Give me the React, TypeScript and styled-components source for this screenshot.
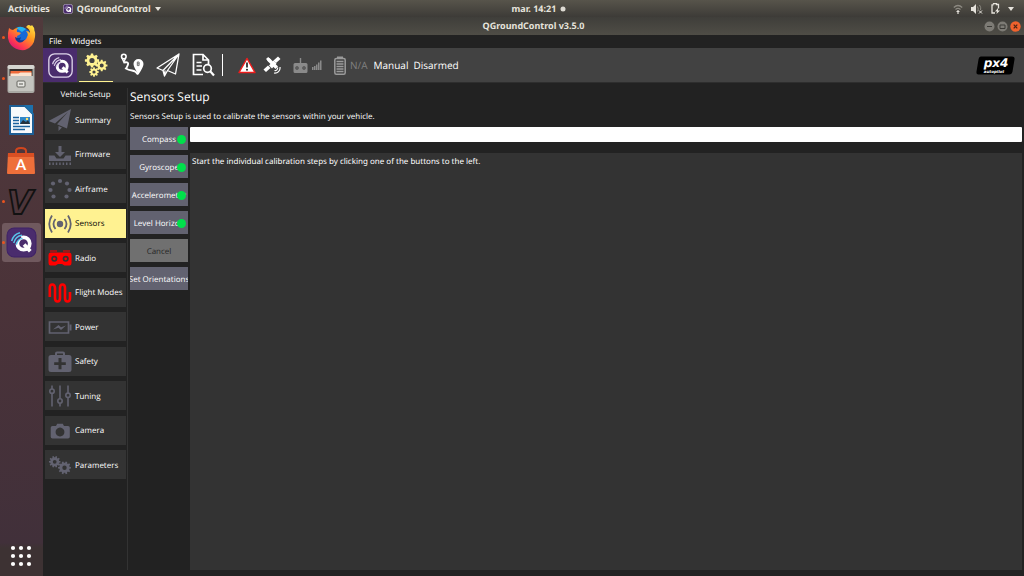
import React from 'react';
import styled, { createGlobalStyle } from 'styled-components';

const GlobalStyle = createGlobalStyle`
  * { box-sizing: border-box; }
  html, body, #root { height: 100%; }
  body {
    margin: 0;
    background: #222222;
    color: #ffffff;
    font-family: "Open Sans", "Noto Sans", sans-serif;
    font-size: 8px;
    text-rendering: geometricPrecision;
    overflow: hidden;
  }
  button { font: inherit; color: inherit; border: 0; padding: 0; margin: 0; background: none; cursor: pointer; text-rendering: inherit; }
  svg { display: block; flex: none; }
`;

const Desktop = styled.div`
  display: flex;
  flex-direction: column;
  height: 100vh;
`;

const PanelBar = styled.header`
  display: grid;
  grid-template-columns: minmax(0, 9fr) auto minmax(0, 8fr);
  align-items: center;
  height: 17px;
  padding: 0 10px 0 8px;
  background: linear-gradient(#57544b, #3d3b37);
  color: #e6e3dc;
  font-family: "Noto Sans", sans-serif;
  font-size: 9px;
  font-weight: 700;
  line-height: 16px;
`;

const PanelGroup = styled.div<{ $end?: boolean; $gap: number }>`
  display: flex;
  align-items: center;
  justify-content: ${(p) => (p.$end ? 'flex-end' : 'flex-start')};
  gap: ${(p) => p.$gap}px;
`;

const PanelButton = styled.button`
  display: flex;
  align-items: center;
  gap: 4px;
`;

const Below = styled.div`
  display: flex;
  flex: 1;
  min-height: 0;
`;

const Dock = styled.nav`
  display: flex;
  flex-direction: column;
  width: 43px;
  flex: none;
  background: linear-gradient(#503a3c, #4b3339 50%, #41303a 94%, #3d3233 95%);
`;

const DockItem = styled.button<{ $active?: boolean }>`
  display: flex;
  align-items: center;
  height: 39px;
  margin: 1px 2px;
  border-radius: 3px;
  background: ${(p) => (p.$active ? '#70595e' : 'transparent')};
  &:last-child { margin-top: auto; }
`;

const RunningDot = styled.span<{ $on?: boolean }>`
  width: 3px;
  height: 3px;
  margin-right: 1px;
  border-radius: 50%;
  background: ${(p) => (p.$on ? '#ea5420' : 'transparent')};
`;

const Window = styled.main`
  display: flex;
  flex-direction: column;
  flex: 1;
  min-width: 0;
`;

const TitleBar = styled.div`
  display: grid;
  grid-template-columns: 1fr auto 1fr;
  align-items: center;
  height: 18px;
  padding: 0 3px;
  background: linear-gradient(#3f3e3a, #4f4d46);
`;

const WindowTitle = styled.h1`
  grid-column: 2;
  margin: 0;
  color: #e6e3dc;
  font-family: "Noto Sans", sans-serif;
  font-size: 9px;
  font-weight: 700;
  line-height: 18px;
`;

const WindowButtons = styled.div`
  display: flex;
  justify-content: flex-end;
  gap: 2px;
`;

const MenuBar = styled.div`
  display: flex;
  gap: 9px;
  height: 13px;
  padding: 1px 0 0 6px;
  font-family: "Noto Sans", sans-serif;
  line-height: 12px;
`;

const Toolbar = styled.div`
  display: flex;
  align-items: center;
  height: 35px;
  padding-right: 9px;
  background: #424242;
  border-bottom: 1px solid #2e2e2e;
`;

const ToolGroup = styled.div`
  display: flex;
  gap: 2px;
`;

const ToolButton = styled.button<{ $brand?: boolean; $selected?: boolean }>`
  display: grid;
  place-items: center;
  width: 34px;
  height: 34px;
  background: ${(p) => (p.$brand ? '#4a2c6d' : 'transparent')};
  box-shadow: ${(p) => (p.$selected ? 'inset 0 -1px #fff291' : 'none')};
`;

const ToolDivider = styled.div`
  width: 1px;
  height: 22px;
  margin: 0 15px 0 1px;
  background: #ffffff;
`;

const Indicators = styled.div`
  display: flex;
  align-items: center;
  flex: 1;
  font-size: 10px;
`;

const Indicator = styled.div<{ $gap: number; $muted?: boolean }>`
  display: flex;
  align-items: center;
  gap: 4px;
  margin-right: ${(p) => p.$gap}px;
  color: ${(p) => (p.$muted ? '#808080' : '#ffffff')};
`;

const Content = styled.div`
  display: flex;
  flex: 1;
  min-height: 0;
  padding: 5px 2px 6px;
`;

const Sidebar = styled.aside`
  display: flex;
  flex-direction: column;
  width: 83px;
  flex: none;
  padding-right: 1px;
  border-right: 1px solid #333333;
`;

const SidebarTitle = styled.h2`
  margin: 0 0 3px;
  font-size: 8px;
  font-weight: 400;
  line-height: 14px;
  text-align: center;
`;

const SetupList = styled.nav`
  display: flex;
  flex: 1;
  flex-direction: column;
  justify-content: space-between;
  padding-bottom: 91px;
`;

const SetupButton = styled.button<{ $selected?: boolean }>`
  display: flex;
  align-items: center;
  gap: 3px;
  height: 29px;
  padding: 1px 0 0 3px;
  background: ${(p) => (p.$selected ? '#fff291' : '#333333')};
  color: ${(p) => (p.$selected ? '#000000' : '#ffffff')};
  white-space: nowrap;
`;

const Page = styled.section`
  display: flex;
  flex: 1;
  flex-direction: column;
  min-width: 0;
  padding-left: 2px;
`;

const PageTitle = styled.h2`
  margin: 0;
  font-size: 12px;
  font-weight: 400;
  line-height: 18px;
`;

const PageText = styled.p`
  margin: 4px 0;
  font-size: 8px;
  line-height: 13px;
`;

const PageBody = styled.div`
  display: flex;
  flex: 1;
  gap: 2px;
  min-height: 0;
`;

const CalibrationList = styled.div`
  display: flex;
  flex-direction: column;
  gap: 5px;
  width: 58px;
  flex: none;
`;

const CalibrationButton = styled.button`
  display: flex;
  align-items: center;
  justify-content: center;
  position: relative;
  height: 23px;
  padding-top: 1px;
  overflow: hidden;
  background: #626270;
  white-space: nowrap;
  &:disabled { background: #707070; color: #262626; cursor: default; }
`;

const StatusDot = styled.span`
  position: absolute;
  right: 2px;
  width: 9px;
  height: 9px;
  border-radius: 50%;
  background: #00e04b;
`;

const Results = styled.div`
  display: flex;
  flex: 1;
  flex-direction: column;
  gap: 11px;
  min-width: 0;
`;

const Progress = styled.progress`
  appearance: none;
  display: block;
  width: 100%;
  height: 15px;
  border: 0;
  border-radius: 1px;
  overflow: hidden;
  background: #ffffff;
  &::-webkit-progress-bar { background: #ffffff; }
  &::-webkit-progress-value { background: #00e04b; }
`;

const Log = styled.div`
  flex: 1;
  padding: 2px;
  background: #333333;
  font-family: "Noto Sans", sans-serif;
  line-height: 13px;
`;

const GREY = '#626270';

function gearPath(cx: number, cy: number, r: number, teeth: number, depth: number, hole: number) {
  const pts: string[] = [];
  for (let i = 0; i < teeth; i++) {
    const step = (Math.PI * 2) / teeth;
    const a = i * step;
    const at = (rad: number, ang: number) =>
      `${(cx + rad * Math.cos(ang)).toFixed(2)} ${(cy + rad * Math.sin(ang)).toFixed(2)}`;
    pts.push(
      at(r - depth, a - step * 0.32),
      at(r, a - step * 0.2),
      at(r, a + step * 0.2),
      at(r - depth, a + step * 0.32),
    );
  }
  return `M${pts.join('L')}Z M${cx + hole} ${cy}a${hole} ${hole} 0 1 0 ${-2 * hole} 0a${hole} ${hole} 0 1 0 ${2 * hole} 0Z`;
}

const QMark = ({ size, frame }: { size: number; frame?: boolean }) => (
  <svg width={size} height={size} viewBox="0 0 30 30">
    <rect x="1" y="1" width="28" height="28" rx="7" fill="#4a2c6d" stroke={frame ? '#ded5ea' : '#3f2266'} strokeWidth={frame ? 1.6 : 1} />
    <circle cx="17" cy="16" r="6" fill="none" stroke="#fff" strokeWidth="3.600" />
    <path d="M17.500 17l6 6.500" stroke="#fff" strokeWidth="3.600" />
    <path d="M4 5h8l3 5-6 6.500-5-2z" fill="#4a2c6d" />
    <g fill="none" stroke={frame ? '#d9cfe6' : '#58c3e8'} strokeWidth="1.400">
      <path d="M5.500 13.500c1-4 4-7 8-8" />
      <path d="M7.500 15.500c1-4 4-7 8-7.500" />
      <path d="M10 17c.6-3 3-5.600 6-6" />
    </g>
  </svg>
);

const Firefox = () => (
  <svg width="30" height="30" viewBox="0 0 30 30">
    <defs>
      <linearGradient id="fox" x1="1" y1="0" x2="0.2" y2="1">
        <stop offset="0" stopColor="#fff04a" />
        <stop offset="0.4" stopColor="#ff9a1f" />
        <stop offset="0.75" stopColor="#ff3b4e" />
        <stop offset="1" stopColor="#d6127a" />
      </linearGradient>
    </defs>
    <g transform="translate(0 1)">
      <circle cx="15.500" cy="13" r="9.500" fill="#1769d8" />
      <path d="M10 4q5-3 10 1l-4 3z" fill="#23b4f0" />
      <path d="M3 4q2 2 4 2 2-2 5-2-2 2-1 4 2 0 4 1-1 2-4 3 0 4 4 5 5 0 6-4 2-3-1-6 3 0 4 2 0-4-4-6l2-2q2 0 3 1l1-1q3 3 2.500 6 1 1 .5 6-1 10-10 13-9 1-14-5Q0 15 3 4z" fill="url(#fox)" />
      <path d="M9 13q4 2 6 0l-1 3q3 1 5-1-3 5-7 3-3-2-3-5z" fill="#14398f" />
    </g>
  </svg>
);

const Files = () => (
  <svg width="30" height="30" viewBox="0 0 30 30">
    <rect x="1.500" y="1" width="27" height="28" rx="2" fill="#a9a9a4" />
    <rect x="1.500" y="1" width="27" height="4" rx="2" fill="#d5d5d0" />
    <rect x="3.500" y="5" width="23" height="7" fill="#35302d" />
    <path d="M4.500 12V7h21v5z" fill="#ef6b3b" />
    <path d="M4.500 12V9.500h8l2-1h11V12z" fill="#fbe3cf" />
    <rect x="2.500" y="12" width="25" height="15" rx="1" fill="#c4c4bf" />
    <rect x="11" y="17" width="8" height="6" rx="1" fill="#e7e7e3" stroke="#65655f" />
    <path d="M13 20h4" stroke="#55554f" />
  </svg>
);

const Writer = () => (
  <svg width="30" height="30" viewBox="0 0 30 30">
    <path d="M4 1h15l8 8v20H4z" fill="#f7fafc" stroke="#1d5f96" strokeWidth="2" />
    <path d="M18 0h9v10z" fill="#1d70ab" />
    <g stroke="#1c639e" strokeWidth="1.500">
      <path d="M7 12.500h6M7 15.500h6M7 18.500h6M7 21.500h17M7 24.500h12" />
    </g>
    <rect x="14" y="12" width="10" height="7" fill="#2f87c8" />
    <path d="M14 19l3-4 3 2 2-2 2 4z" fill="#26333f" />
    <circle cx="21" cy="14" r="1.200" fill="#ffe36b" />
  </svg>
);

const Software = () => (
  <svg width="30" height="30" viewBox="0 0 30 30">
    <path d="M10 9V5q0-3 5-3t5 3v4" fill="none" stroke="#d2461d" strokeWidth="2" />
    <path d="M2 7h26l1 20q0 1-1 1H2q-1 0-1-1z" fill="#ee6f3a" />
    <path d="M2 7h26v4H2z" fill="#d94f23" />
    <text x="15" y="24" fontSize="15" fontWeight="700" fill="#fff" textAnchor="middle" fontFamily="Lato, sans-serif">A</text>
  </svg>
);

const VApp = () => (
  <svg width="30" height="30" viewBox="0 0 30 30" overflow="visible">
    <text x="14" y="27" fontSize="33" fontWeight="700" fontStyle="italic" textAnchor="middle" fill="none" stroke="#111" strokeWidth="1.800" fontFamily="DejaVu Sans, sans-serif">V</text>
  </svg>
);

const AppGrid = () => (
  <svg width="30" height="30" viewBox="0 0 30 30" fill="#fff">
    {[7, 15, 23].map((y) => [7, 15, 23].map((x) => <circle key={`${x}-${y}`} cx={x} cy={y} r="2.100" />))}
  </svg>
);

const dockItems = [
  { name: 'Firefox', icon: <Firefox />, on: true },
  { name: 'Files', icon: <Files />, on: true },
  { name: 'LibreOffice Writer', icon: <Writer /> },
  { name: 'Ubuntu Software', icon: <Software /> },
  { name: 'V', icon: <VApp />, on: true },
  { name: 'QGroundControl', icon: <QMark size={31} />, on: true, active: true },
  { name: 'Show Applications', icon: <AppGrid /> },
];

const Caret = () => (
  <svg width="6" height="4" viewBox="0 0 6 4"><path d="M0 0h6L3 4z" fill="#e6e3dc" /></svg>
);

const GearsIcon = () => (
  <svg width="24" height="24" viewBox="0 0 24 24" fill="#fff291" fillRule="evenodd">
    <path d={gearPath(8, 7.5, 7.2, 8, 1.7, 2.6)} />
    <path d={gearPath(17.700, 12.500, 5.800, 8, 1.400, 2)} />
    <path d={gearPath(10, 19, 4.800, 8, 1.200, 1.600)} />
  </svg>
);

const PlanIcon = () => (
  <svg width="24" height="24" viewBox="0 0 24 24" fill="none" stroke="#fff">
    <circle cx="3.800" cy="3.500" r="2.300" strokeWidth="1.600" />
    <path d="M2 5l1.800 4 1.800-4" strokeWidth="1.400" />
    <path d="M4 9.500Q9 8.500 8 11.500T6 15.500q2 1.500 6 2t6 4" strokeWidth="1.900" />
    <path d="M18.500 6a5 5 0 0 1 5 5q0 3-5 10.500-5-7.500-5-10.500a5 5 0 0 1 5-5z" fill="#fff" stroke="none" />
    <path d="M17.300 9h1.800v3.600h-1.800zM17.300 10.800h2" stroke="#666" strokeWidth=".9" />
  </svg>
);

const FlyIcon = () => (
  <svg width="24" height="24" viewBox="0 0 24 24" fill="none" stroke="#fff" strokeWidth="1.300" strokeLinejoin="round">
    <path d="M23 1L1 15l6 2.500L23 1l-3.500 20-8-3.500zM7 17.500L8.500 23l3-5.500L23 1M8.500 23L9 18z" />
  </svg>
);

const AnalyzeIcon = () => (
  <svg width="24" height="24" viewBox="0 0 24 24" fill="none" stroke="#fff" strokeWidth="1.700">
    <path d="M11 21.500H1.500v-20H11l5.500 5.500v4M11 1.500V7h5.500M4.500 9.500h5M4.500 13h5.500M4.500 17h5" />
    <circle cx="15.500" cy="15.500" r="3.800" />
    <path d="M18 18l4 4.500" strokeWidth="2.200" />
  </svg>
);

const WarningIcon = () => (
  <svg width="18" height="17" viewBox="0 0 18 17">
    <path d="M9 1.500L17 15.500H1z" fill="#fff" stroke="#ee1c1c" strokeWidth="1.500" strokeLinejoin="round" />
    <path d="M9 5.500v5" stroke="#222" strokeWidth="1.700" />
    <circle cx="9" cy="12.800" r="1" fill="#222" />
  </svg>
);

const SatelliteIcon = () => (
  <svg width="18" height="18" viewBox="0 0 18 18" fill="#fff">
    <path d="M3 3l2.200-2 3 3-2.200 2zM.5 13.500L5 9.500l2.500 2.500L3 16zM10.500 4.500L15 .5 17.500 3 13 7z" />
    <path d="M4 4.500L6.500 2l8.500 8.500-2.500 2.500z" />
    <path d="M6 9.500l4.500-5 3 3L9 12.500z" />
    <path d="M11.500 14.500a2.500 2.500 0 0 0 3-3M11 17a5.200 5.200 0 0 0 6-6" fill="none" stroke="#fff" strokeWidth="1.200" />
  </svg>
);

const RcIcon = () => (
  <svg width="15" height="17" viewBox="0 0 15 17" fill="#8a8a8a">
    <path d="M6.800 1h1.400v5H13q1.500 0 1.500 1.500v7q0 1.500-1.500 1.500H2Q.5 16 .5 14.500v-7Q.5 6 2 6h4.800z" />
    <circle cx="4" cy="11" r="1.700" fill="#424242" />
    <circle cx="11" cy="11" r="1.700" fill="#424242" />
    <circle cx="4" cy="11" r=".7" />
    <circle cx="11" cy="11" r=".7" />
  </svg>
);

const SignalIcon = () => (
  <svg width="10" height="10" viewBox="0 0 10 10" fill="#8a8a8a">
    <path d="M0 7h1.500v3H0zM2 6h1.500v4H2zM4 4.500h1.500V10H4zM6 2.500h1.500V10H6zM8 .5h1.500V10H8z" />
  </svg>
);

const BatteryIcon = () => (
  <svg width="12" height="19" viewBox="0 0 12 19">
    <path d="M3 .5h6v2H3z" fill="#9a9a9a" />
    <rect x=".8" y="2.500" width="10.400" height="15.700" rx="1.500" fill="none" stroke="#9a9a9a" strokeWidth="1.500" />
    <path d="M2.500 5.500h7M2.500 8h7M2.500 10.500h7M2.500 13h7M2.500 15.500h7" stroke="#9a9a9a" strokeWidth="1.500" />
  </svg>
);

const Px4Logo = () => (
  <svg width="39" height="19" viewBox="0 0 39 19">
    <path d="M5 .5h31q3 0 2.500 3l-2 12q-.5 3-3.500 3H2.500q-2.500 0-2-3l2-12q.5-3 2.500-3z" fill="#000" />
    <text x="20" y="11" fontSize="12" fontWeight="700" fontStyle="italic" textAnchor="middle" fill="#fff" fontFamily="DejaVu Sans, sans-serif">px4</text>
    <text x="18" y="17" fontSize="4" fontWeight="700" fontStyle="italic" textAnchor="middle" fill="#fff" fontFamily="DejaVu Sans, sans-serif">autopilot</text>
  </svg>
);

const SideIcon = ({ children, color = GREY }: { children: React.ReactNode; color?: string }) => (
  <svg width="24" height="24" viewBox="0 0 24 24" fill={color} stroke="none" color={color}>{children}</svg>
);

const setupItems = [
  { label: 'Summary', icon: <SideIcon><path d="M23 1L.5 13l6.500 2.500L20 4 9 16.200l10 4.300zM10.500 18v5l3.500-3.500z" /></SideIcon> },
  {
    label: 'Firmware',
    icon: (
      <SideIcon>
        <path d="M10.500 3h3v6h3.500L12 14 7 9h3.500z" />
        <path d="M1 12.500h5.500l2 3h7l2-3H23V18H1z" />
        <path d="M1 19.500h1.500V22H1zM4.400 19.500h1.500V22H4.400zM7.800 19.500h1.500V22H7.800zM11.200 19.500h1.500V22h-1.500zM14.600 19.500h1.500V22h-1.500zM18 19.500h1.500V22H18zM21.500 19.500H23V22h-1.500z" />
      </SideIcon>
    ),
  },
  {
    label: 'Airframe',
    icon: (
      <SideIcon>
        {[[12, 4], [19, 6.500], [21.500, 13], [18.500, 19.500], [5.500, 19.500], [2.500, 13], [5, 6.500]].map(([x, y]) => (
          <circle key={`${x}-${y}`} cx={x} cy={y} r="2.100" />
        ))}
      </SideIcon>
    ),
  },
  {
    label: 'Sensors',
    selected: true,
    icon: (
      <SideIcon>
        <circle cx="12" cy="12" r="3.200" />
        <path d="M7.500 7q-4 5 0 10M16.500 7q4 5 0 10M4 3.500q-5.500 8.500 0 17M20 3.500q5.500 8.500 0 17" fill="none" stroke="currentColor" strokeWidth="1.800" />
      </SideIcon>
    ),
  },
  {
    label: 'Radio',
    icon: (
      <SideIcon color="#ff0000">
        <path d="M2 4.500h7V5.500H2zM15 4.500h7V5.500h-7zM2.500 6.500h19q2 0 2 2.500v8q0 2.500-2 2.500h-5L14 18h-4l-2.500 1.500h-5q-2 0-2-2.500V9q0-2.500 2-2.500z" />
        <g fill="none" stroke="#333333" strokeWidth="1.700"><circle cx="6.300" cy="12.800" r="2.200" /><circle cx="17.700" cy="12.800" r="2.200" /></g>
      </SideIcon>
    ),
  },
  {
    label: 'Flight Modes',
    icon: (
      <SideIcon color="#ff0000">
        <path d="M1.800 16V7q0-3.500 2.500-3.500T7 7v10q0 3.500 2.500 3.500T12 17V7q0-3.500 2.500-3.500T17 7v10q0 3.500 2.500 3.500T22 17v-6" fill="none" stroke="currentColor" strokeWidth="2.600" />
      </SideIcon>
    ),
  },
  {
    label: 'Power',
    icon: (
      <SideIcon>
        <path d="M1.500 7H20.500V18H1.500z" fill="none" stroke="currentColor" strokeWidth="1.700" />
        <path d="M21.500 9.500h2v6h-2zM5 14.500l5.500-4.500 2.500 2.300 5-1.800-5 4.500-2.500-2.300z" />
      </SideIcon>
    ),
  },
  {
    label: 'Safety',
    icon: (
      <SideIcon>
        <path fillRule="evenodd" d="M7 5V3.500Q7 1.500 9 1.500h6q2 0 2 2V5h4q2.500 0 2.500 2.500v12q0 2.500-2.500 2.500H3Q.5 22 .5 19.500v-12Q.5 5 3 5zM9 5h6V3.500H9zM10.500 8v4.200H6.200v2.800h4.300v4.200h3V15h4.300v-2.800h-4.300V8z" />
      </SideIcon>
    ),
  },
  {
    label: 'Tuning',
    icon: (
      <SideIcon>
        <path d="M4 1.500V5M4 9.500v13M12 1.500v13M12 19.500v3M20 1.500v7.500M20 13.500v9" stroke="currentColor" strokeWidth="1.600" />
        <g fill="none" stroke="currentColor" strokeWidth="1.600"><circle cx="4" cy="7.200" r="2.200" /><circle cx="12" cy="17" r="2.200" /><circle cx="20" cy="11.300" r="2.200" /></g>
      </SideIcon>
    ),
  },
  {
    label: 'Camera',
    icon: (
      <SideIcon>
        <path fillRule="evenodd" d="M4.500 7H8l1.200-2.200h5.600L16 7h4q1.800 0 1.800 1.800v9q0 1.800-1.800 1.800H4.500q-1.800 0-1.800-1.800v-9Q2.700 7 4.500 7zM12 8.600a4.400 4.400 0 1 0 .01 0z" />
      </SideIcon>
    ),
  },
  {
    label: 'Parameters',
    icon: (
      <SideIcon>
        <path fillRule="evenodd" d={gearPath(6.700, 8.800, 5.800, 10, 1.300, 1.900)} />
        <path fillRule="evenodd" d={gearPath(16.500, 14.800, 6.500, 10, 1.400, 2.200)} />
      </SideIcon>
    ),
  },
];

const calibrations = [
  { label: 'Compass', done: true },
  { label: 'Gyroscope', done: true },
  { label: 'Accelerometer', done: true },
  { label: 'Level Horizon', done: true },
  { label: 'Cancel', disabled: true },
  { label: 'Set Orientations' },
];

export default function App() {
  return (
    <Desktop>
      <GlobalStyle />
      <PanelBar>
        <PanelGroup $gap={13}>
          <PanelButton>Activities</PanelButton>
          <PanelButton><QMark size={10} frame />QGroundControl<Caret /></PanelButton>
        </PanelGroup>
        <PanelButton>
          mar. 14:21
          <svg width="6" height="6" viewBox="0 0 6 6"><circle cx="3" cy="3" r="2.500" fill="#dedbd3" /></svg>
        </PanelButton>
        <PanelGroup $gap={8} $end>
          <svg width="10" height="10" viewBox="0 0 10 10" fill="none" stroke="#bdbab2" strokeWidth="1.200">
            <path d="M.8 3.500q4.200-4 8.400 0M2.500 5.500q2.500-2.300 5 0" stroke="#8c8981" />
            <path d="M5 6v4M3.500 7.500h3" stroke="#e6e3dc" />
          </svg>
          <svg width="12" height="10" viewBox="0 0 12 10">
            <path d="M0 3h2l3-3v10L2 7H0z" fill="#e6e3dc" />
            <path d="M6.500 2.500q1.500 2.500 0 5M8.500 1q2 3 1 5" stroke="#8c8981" fill="none" />
            <path d="M8 6.500l3 3M11 6.500l-3 3" stroke="#e6e3dc" />
          </svg>
          <svg width="9" height="11" viewBox="0 0 9 11">
            <path d="M2.500 1.500V.7h3v.8h2v4M4 10H1V1.800h1.500" fill="none" stroke="#e6e3dc" strokeWidth="1.300" />
            <path d="M7 5L4 8.500h2L5.500 11 9 7.500H7z" fill="#e6e3dc" />
          </svg>
          <Caret />
        </PanelGroup>
      </PanelBar>
      <Below>
        <Dock aria-label="Dock">
          {dockItems.map((d) => (
            <DockItem key={d.name} $active={d.active} aria-label={d.name}>
              <RunningDot $on={d.on} />
              {d.icon}
            </DockItem>
          ))}
        </Dock>
        <Window>
          <TitleBar>
            <WindowTitle>QGroundControl v3.5.0</WindowTitle>
            <WindowButtons>
              <button aria-label="Minimize">
                <svg width="11" height="11" viewBox="0 0 11 11"><circle cx="5.500" cy="5.500" r="5" fill="#7d7b75" /><path d="M3 5.500h5" stroke="#3b3a36" /></svg>
              </button>
              <button aria-label="Maximize">
                <svg width="11" height="11" viewBox="0 0 11 11"><circle cx="5.500" cy="5.500" r="5" fill="#7d7b75" /><path d="M3 4h5v3.500H3z" fill="none" stroke="#3b3a36" /></svg>
              </button>
              <button aria-label="Close">
                <svg width="11" height="11" viewBox="0 0 11 11"><circle cx="5.500" cy="5.500" r="5.200" fill="#f0622d" /><path d="M3.700 3.700l3.600 3.600M7.300 3.700L3.700 7.300" stroke="#4a2415" strokeWidth="1.200" /></svg>
              </button>
            </WindowButtons>
          </TitleBar>
          <MenuBar>
            <button>File</button>
            <button>Widgets</button>
          </MenuBar>
          <Toolbar>
            <ToolGroup>
              <ToolButton $brand aria-label="Application settings"><QMark size={25} frame /></ToolButton>
              <ToolButton $selected aria-label="Vehicle setup"><GearsIcon /></ToolButton>
              <ToolButton aria-label="Plan"><PlanIcon /></ToolButton>
              <ToolButton aria-label="Fly"><FlyIcon /></ToolButton>
              <ToolButton aria-label="Analyze"><AnalyzeIcon /></ToolButton>
            </ToolGroup>
            <ToolDivider />
            <Indicators>
              <Indicator $gap={7}><WarningIcon /></Indicator>
              <Indicator $gap={12}><SatelliteIcon /></Indicator>
              <Indicator $gap={12}><RcIcon /><SignalIcon /></Indicator>
              <Indicator $gap={6} $muted><BatteryIcon />N/A</Indicator>
              <Indicator $gap={5}>Manual</Indicator>
              <Indicator $gap={0}>Disarmed</Indicator>
            </Indicators>
            <Px4Logo />
          </Toolbar>
          <Content>
            <Sidebar>
              <SidebarTitle>Vehicle Setup</SidebarTitle>
              <SetupList>
                {setupItems.map((s) => (
                  <SetupButton key={s.label} $selected={s.selected}>
                    {s.icon}
                    {s.label}
                  </SetupButton>
                ))}
              </SetupList>
            </Sidebar>
            <Page>
              <PageTitle>Sensors Setup</PageTitle>
              <PageText>Sensors Setup is used to calibrate the sensors within your vehicle.</PageText>
              <PageBody>
                <CalibrationList>
                  {calibrations.map((c) => (
                    <CalibrationButton key={c.label} disabled={c.disabled}>
                      {c.label}
                      {c.done && <StatusDot />}
                    </CalibrationButton>
                  ))}
                </CalibrationList>
                <Results>
                  <Progress value={0} max={1} aria-label="Calibration progress" />
                  <Log>Start the individual calibration steps by clicking one of the buttons to the left.</Log>
                </Results>
              </PageBody>
            </Page>
          </Content>
        </Window>
      </Below>
    </Desktop>
  );
}
